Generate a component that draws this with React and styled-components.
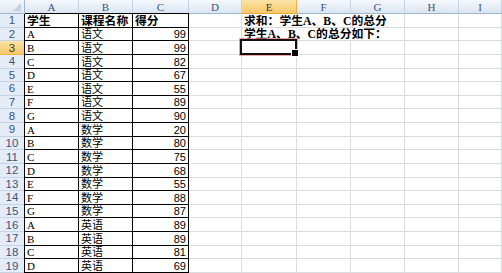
import React from "react";
import styled, { createGlobalStyle } from "styled-components";

const GlobalStyle = createGlobalStyle`
  html, body {
    margin: 0;
    padding: 0;
    background: #ffffff;
    overflow: hidden;
  }
  * {
    box-sizing: border-box;
  }
`;

const COLS = ["A", "B", "C", "D", "E", "F", "G", "H", "I"];

const rows = [
  ["A", "语文", 99],
  ["B", "语文", 99],
  ["C", "语文", 82],
  ["D", "语文", 67],
  ["E", "语文", 55],
  ["F", "语文", 89],
  ["G", "语文", 90],
  ["A", "数学", 20],
  ["B", "数学", 80],
  ["C", "数学", 75],
  ["D", "数学", 68],
  ["E", "数学", 55],
  ["F", "数学", 88],
  ["G", "数学", 87],
  ["A", "英语", 89],
  ["B", "英语", 89],
  ["C", "英语", 81],
  ["D", "英语", 69],
];

const Sheet = styled.div`
  display: grid;
  grid-template-columns: 25px 54px 54px 56px 53px 55px 54px 54px 54px 1fr;
  grid-template-rows: 14px repeat(19, 13.63px);
  width: 502px;
  height: 273px;
  overflow: hidden;
  font-family: "Liberation Serif", "Noto Sans CJK SC", serif;
  font-size: 11px;
  color: #000;
`;

const Corner = styled.div`
  position: relative;
  background: linear-gradient(#f4f7fb, #dfe7f2);
  border-right: 1px solid #9eb6ce;
  border-bottom: 1px solid #9eb6ce;

  &::after {
    content: "";
    position: absolute;
    right: 3px;
    bottom: 2px;
    width: 8px;
    height: 8px;
    background: #c3d0e0;
    clip-path: polygon(100% 0, 100% 100%, 0 100%);
  }
`;

const ColHead = styled.div`
  display: flex;
  align-items: center;
  justify-content: center;
  font-family: "Liberation Serif", serif;
  font-size: 11px;
  color: ${(p) => (p.$active ? "#4a3a14" : "#3d5478")};
  background: ${(p) =>
    p.$active
      ? "linear-gradient(#fbe3a8, #f4c86a)"
      : "linear-gradient(#f5f8fc, #dbe5f2)"};
  border-right: 1px solid ${(p) => (p.$active ? "#f2b341" : "#c5d3e3")};
  border-bottom: 1px solid ${(p) => (p.$active ? "#f0a830" : "#9eb6ce")};
`;

const RowHead = styled.div`
  display: flex;
  align-items: center;
  justify-content: center;
  font-family: "Liberation Sans", sans-serif;
  font-size: 11.5px;
  color: ${(p) => (p.$active ? "#4a3a14" : "#3d5478")};
  background: ${(p) =>
    p.$active ? "linear-gradient(#fbe3a8, #f4c86a)" : "#e4ecf7"};
  border-right: 1px solid ${(p) => (p.$active ? "#f0a830" : "#9eb6ce")};
  border-bottom: 1px solid ${(p) => (p.$active ? "#f2b341" : "#c5d3e3")};
`;

const Cell = styled.div`
  position: relative;
  display: flex;
  align-items: flex-end;
  justify-content: ${(p) => (p.$num ? "flex-end" : "flex-start")};
  grid-column: ${(p) => (p.$span ? `span ${p.$span}` : "auto")};
  padding: 0 2px 0 2px;
  line-height: 12px;
  white-space: nowrap;
  font-family: ${(p) =>
    p.$num
      ? `"Liberation Sans", sans-serif`
      : `"Liberation Serif", "Noto Sans CJK SC", serif`};
  font-size: ${(p) => (p.$bold ? "11.8px" : "11px")};
  font-weight: ${(p) => (p.$bold ? 700 : 400)};
  border-right: 1px solid ${(p) => (p.$boxed ? "#000" : "#dadcdd")};
  border-bottom: 1px solid ${(p) => (p.$boxed ? "#000" : "#dadcdd")};
  box-shadow: ${(p) =>
    [p.$firstCol && "-1px 0 0 #000", p.$firstRow && "0 -1px 0 #000"]
      .filter(Boolean)
      .join(", ") || "none"};
`;

const Selection = styled.div`
  position: absolute;
  z-index: 3;
  left: -2px;
  top: -2px;
  right: -1px;
  bottom: -1px;
  border: 2px solid #111;
  outline: 1px solid rgba(236, 120, 128, 0.7);
  pointer-events: none;

  &::after {
    content: "";
    position: absolute;
    right: -4px;
    bottom: -4px;
    width: 6px;
    height: 6px;
    background: #000;
    border: 1px solid #fff;
  }
`;

const App = () => {
  const header = ["学生", "课程名称", "得分"];

  const renderRow = (r) => {
    const n = r + 1;
    const cells = [];
    if (n === 1) {
      header.forEach((h, i) => (
        cells.push(
          <Cell key={i} $boxed $bold $firstCol={i === 0} $firstRow>
            {h}
          </Cell>
        )
      ));
    } else {
      const [name, course, score] = rows[n - 2];
      cells.push(<Cell key="a" $boxed $firstCol>{name}</Cell>);
      cells.push(<Cell key="b" $boxed>{course}</Cell>);
      cells.push(<Cell key="c" $boxed $num>{score}</Cell>);
    }
    cells.push(<Cell key="d" />);
    if (n === 1) {
      cells.push(<Cell key="e" $bold $span={3}>求和：学生A、B、C的总分</Cell>);
    } else if (n === 2) {
      cells.push(<Cell key="e" $bold $span={3}>学生A、B、C的总分如下：</Cell>);
    } else {
      cells.push(
        <Cell key="e">{n === 3 && <Selection />}</Cell>
      );
      cells.push(<Cell key="f" />);
      cells.push(<Cell key="g" />);
    }
    cells.push(<Cell key="h" />);
    cells.push(<Cell key="i" />);
    return (
      <React.Fragment key={n}>
        <RowHead $active={n === 3}>{n}</RowHead>
        {cells}
      </React.Fragment>
    );
  };

  return (
    <>
      <GlobalStyle />
      <Sheet>
        <Corner />
        {COLS.map((c) => (
          <ColHead key={c} $active={c === "E"}>
            {c}
          </ColHead>
        ))}
        {Array.from({ length: 19 }, (_, r) => renderRow(r))}
      </Sheet>
    </>
  );
};

export default App;
